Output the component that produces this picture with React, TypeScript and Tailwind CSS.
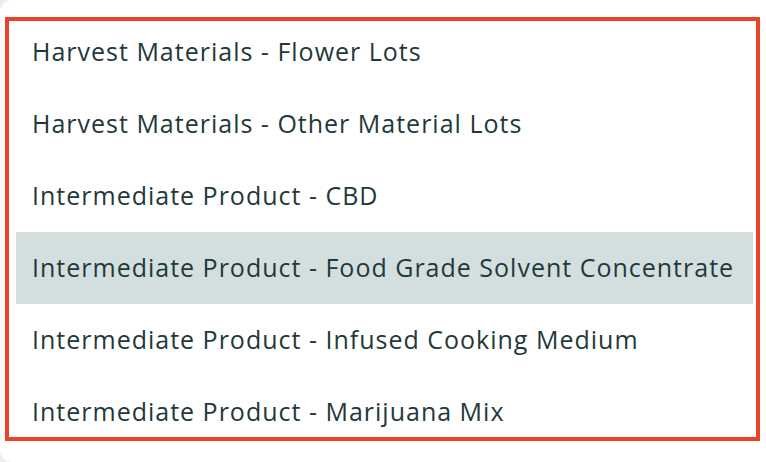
const items = [
  "Harvest Materials - Flower Lots",
  "Harvest Materials - Other Material Lots",
  "Intermediate Product - CBD",
  "Intermediate Product - Food Grade Solvent Concentrate",
  "Intermediate Product - Infused Cooking Medium",
  "Intermediate Product - Marijuana Mix",
];

export default function App() {
  const selected = 3;
  return (
    <div className="h-[462px] w-[766px] bg-[#ededed]">
      <div className="h-full w-full rounded-l-[12px] bg-white pl-[5px] pr-[6px] pt-[17px] pb-[21px]">
        <div className="h-full overflow-hidden border-4 border-[#e8432b] bg-white">
          <ul className="-mt-[5px] ml-[7px] mr-[3px] flex flex-col font-['Open_Sans',sans-serif] text-[25px] tracking-[1px] text-[#1f393a]">
            {items.map((item, i) => (
              <li
                key={item}
                className={`flex h-[72px] shrink-0 items-center whitespace-nowrap px-4 ${i === selected ? "bg-[#d3dfdf]" : ""}`}
              >
                {item}
              </li>
            ))}
          </ul>
        </div>
      </div>
    </div>
  );
}
